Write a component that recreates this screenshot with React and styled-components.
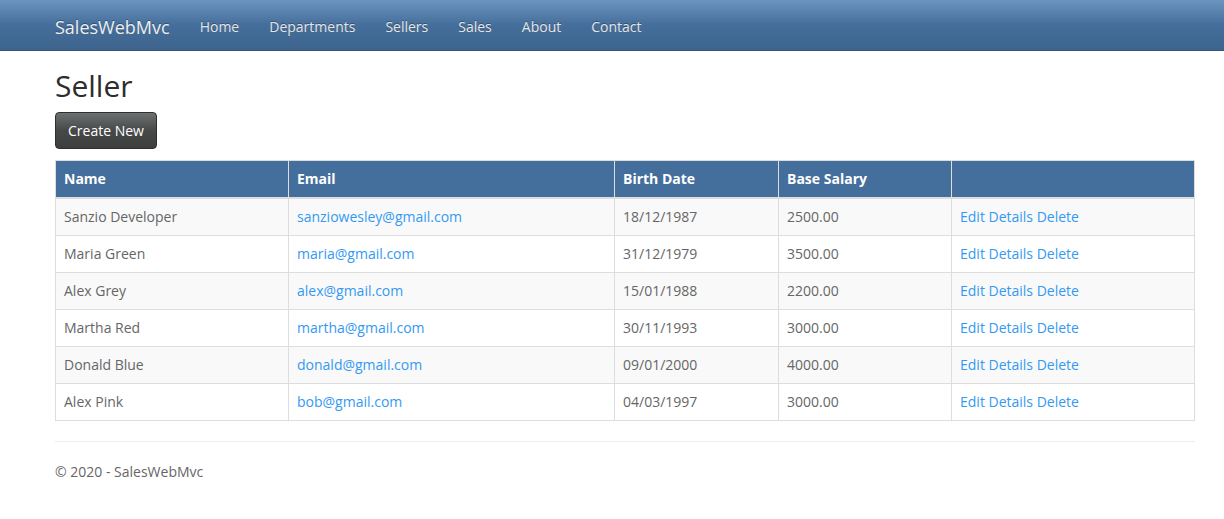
import React from 'react';
import styled, { createGlobalStyle } from 'styled-components';

const sellers = [
  { name: 'Sanzio Developer', email: 'sanziowesley@gmail.com', birth: '18/12/1987', salary: '2500.00' },
  { name: 'Maria Green', email: 'maria@gmail.com', birth: '31/12/1979', salary: '3500.00' },
  { name: 'Alex Grey', email: 'alex@gmail.com', birth: '15/01/1988', salary: '2200.00' },
  { name: 'Martha Red', email: 'martha@gmail.com', birth: '30/11/1993', salary: '3000.00' },
  { name: 'Donald Blue', email: 'donald@gmail.com', birth: '09/01/2000', salary: '4000.00' },
  { name: 'Alex Pink', email: 'bob@gmail.com', birth: '04/03/1997', salary: '3000.00' },
];

const navItems = ['Home', 'Departments', 'Sellers', 'Sales', 'About', 'Contact'];

const App = () => {
  return (
    <>
      <GlobalStyle />
      <Navbar>
        <NavInner>
          <Brand href="#">SalesWebMvc</Brand>
          <NavList>
            {navItems.map((item) => (
              <li key={item}>
                <NavLink href="#">{item}</NavLink>
              </li>
            ))}
          </NavList>
        </NavInner>
      </Navbar>

      <Container>
        <Title>Seller</Title>
        <ButtonRow>
          <CreateButton href="#">Create New</CreateButton>
        </ButtonRow>

        <Table>
          <thead>
            <tr>
              <Th $width={233}>Name</Th>
              <Th $width={326}>Email</Th>
              <Th $width={164}>Birth Date</Th>
              <Th $width={173}>Base Salary</Th>
              <Th></Th>
            </tr>
          </thead>
          <tbody>
            {sellers.map((s) => (
              <Row key={s.email}>
                <Td>{s.name}</Td>
                <Td><Link href="#">{s.email}</Link></Td>
                <Td>{s.birth}</Td>
                <Td>{s.salary}</Td>
                <Td>
                  <Link href="#">Edit</Link> <Link href="#">Details</Link> <Link href="#">Delete</Link>
                </Td>
              </Row>
            ))}
          </tbody>
        </Table>

        <Rule />
        <footer>
          <p>&copy; 2020 - SalesWebMvc</p>
        </footer>
      </Container>
    </>
  );
};

export default App;

// Styled Components

const GlobalStyle = createGlobalStyle`
  * { box-sizing: border-box; }
  body {
    margin: 0;
    font-family: "Open Sans", "Helvetica Neue", Arial, sans-serif;
    font-size: 14px;
    line-height: 20px;
    color: #666666;
    background: #fff;
  }
  p { margin: 0 0 10px; }
`;

const Navbar = styled.nav`
  height: 51px;
  background-image: linear-gradient(#6d94bf, #446e9b 50%, #3e648d);
  border-bottom: 1px solid #345578;
`;

const NavInner = styled.div`
  width: 1140px;
  margin-left: 55px;
  display: flex;
  align-items: center;
  height: 50px;
  padding-top: 3px;
`;

const Brand = styled.a`
  font-size: 18px;
  line-height: 20px;
  color: #eeeeee;
  text-decoration: none;
  padding: 15px 15px 15px 0;
  text-shadow: 0 -1px 0 rgba(0, 0, 0, 0.3);
`;

const NavList = styled.ul`
  display: flex;
  list-style: none;
  margin: 0;
  padding: 0;
`;

const NavLink = styled.a`
  display: block;
  padding: 15px;
  line-height: 20px;
  color: #e6e6e6;
  text-decoration: none;
  text-shadow: 0 -1px 0 rgba(0, 0, 0, 0.3);
`;

const Container = styled.div`
  width: 1140px;
  margin-left: 55px;
`;

const Title = styled.h2`
  font-size: 30px;
  font-weight: 400;
  line-height: 33px;
  color: #2d2d2d;
  margin: 18px 0 10px;
`;

const ButtonRow = styled.p`
  margin: 0 0 11px;
`;

const CreateButton = styled.a`
  display: inline-block;
  padding: 8px 12px;
  line-height: 19px;
  font-size: 14px;
  color: #fff;
  text-decoration: none;
  border: 1px solid #2e2f2f;
  border-radius: 4px;
  background-image: linear-gradient(#6d7070, #474949 50%, #3d3f3f);
`;

const Table = styled.table`
  width: 1140px;
  border-collapse: collapse;
  border: 1px solid #dddddd;
  margin-bottom: 20px;
`;

const Th = styled.th`
  width: ${(p) => (p.$width ? `${p.$width}px` : 'auto')};
  text-align: left;
  padding: 8px;
  height: 37px;
  color: #fff;
  font-weight: 700;
  background: #446e9b;
  border: 1px solid #dddddd;
  border-bottom: 2px solid #dddddd;
`;

const Row = styled.tr`
  &:nth-child(odd) {
    background: #f9f9f9;
  }
`;

const Td = styled.td`
  padding: 8px;
  line-height: 20px;
  border: 1px solid #dddddd;
`;

const Link = styled.a`
  color: #3399f3;
  text-decoration: none;
`;

const Rule = styled.hr`
  margin: 20px 0;
  border: 0;
  border-top: 1px solid #eeeeee;
`;
